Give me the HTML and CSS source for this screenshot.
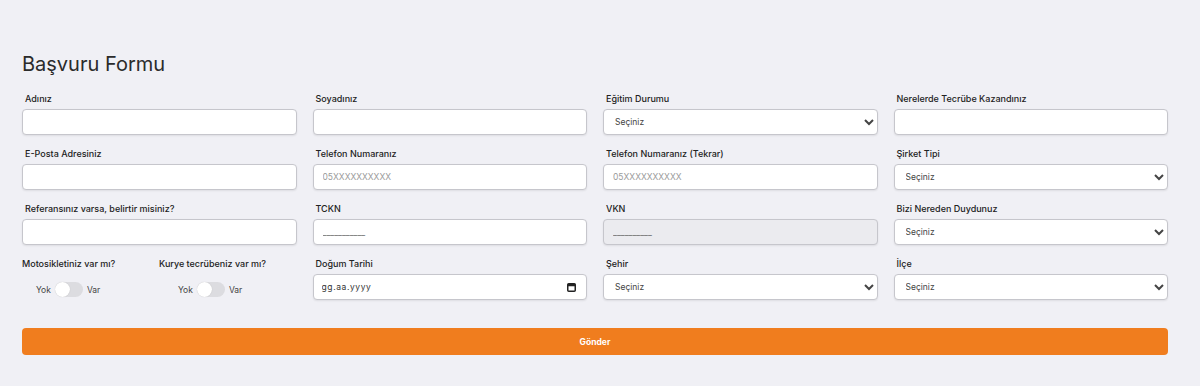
FILE: index.html
```html
<!DOCTYPE html>
<html lang="tr">
<head>
    <meta charset="UTF-8">
    <meta name="viewport" content="width=device-width, initial-scale=1.0">
    <title>Başvuru Formu</title>
    <link rel="stylesheet" href="styles.css">
</head>
<body>
    <div class="page">
        <h2 class="title">Başvuru Formu</h2>
        <form class="form-grid">
            <div class="field">
                <label>Adınız</label>
                <input type="text" class="control">
            </div>
            <div class="field">
                <label>Soyadınız</label>
                <input type="text" class="control">
            </div>
            <div class="field">
                <label>Eğitim Durumu</label>
                <select class="control"><option>Seçiniz</option></select>
            </div>
            <div class="field">
                <label>Nerelerde Tecrübe Kazandınız</label>
                <input type="text" class="control">
            </div>

            <div class="field">
                <label>E-Posta Adresiniz</label>
                <input type="text" class="control">
            </div>
            <div class="field">
                <label>Telefon Numaranız</label>
                <input type="text" class="control" placeholder="05XXXXXXXXXX">
            </div>
            <div class="field">
                <label>Telefon Numaranız (Tekrar)</label>
                <input type="text" class="control" placeholder="05XXXXXXXXXX">
            </div>
            <div class="field">
                <label>Şirket Tipi</label>
                <select class="control"><option>Seçiniz</option></select>
            </div>

            <div class="field">
                <label>Referansınız varsa, belirtir misiniz?</label>
                <input type="text" class="control">
            </div>
            <div class="field">
                <label>TCKN</label>
                <input type="text" class="control mask" placeholder="___________">
            </div>
            <div class="field">
                <label>VKN</label>
                <input type="text" class="control mask" placeholder="__________" disabled>
            </div>
            <div class="field">
                <label>Bizi Nereden Duydunuz</label>
                <select class="control"><option>Seçiniz</option></select>
            </div>

            <div class="field switches">
                <div class="switch-group">
                    <label>Motosikletiniz var mı?</label>
                    <div class="switch-row">
                        <span>Yok</span>
                        <span class="switch"><span class="knob"></span></span>
                        <span>Var</span>
                    </div>
                </div>
                <div class="switch-group">
                    <label>Kurye tecrübeniz var mı?</label>
                    <div class="switch-row">
                        <span>Yok</span>
                        <span class="switch"><span class="knob"></span></span>
                        <span>Var</span>
                    </div>
                </div>
            </div>
            <div class="field">
                <label>Doğum Tarihi</label>
                <div class="date-wrap">
                    <input type="text" class="control date" placeholder="gg.aa.yyyy">
                    <svg class="cal" width="9" height="9" viewBox="0 0 9 9">
                        <rect x="0.75" y="0.75" width="7.5" height="7.5" rx="1" fill="none" stroke="#222" stroke-width="1.5"/>
                        <rect x="0.75" y="0.75" width="7.5" height="2.5" fill="#222"/>
                    </svg>
                </div>
            </div>
            <div class="field">
                <label>Şehir</label>
                <select class="control"><option>Seçiniz</option></select>
            </div>
            <div class="field">
                <label>İlçe</label>
                <select class="control"><option>Seçiniz</option></select>
            </div>

            <button type="button" class="submit">Gönder</button>
        </form>
    </div>
</body>
</html>
```

FILE: styles.css
```css
body {
    margin: 0;
    background-color: #f0f0f5;
    font-family: Inter, "Noto Sans", sans-serif;
    color: #222;
}
.page {
    padding: 52px 32px 0 22px;
}
.title {
    margin: 0 0 16px 0;
    font-size: 20px;
    font-weight: 400;
    line-height: 25px;
    color: #2b2b2b;
}
.form-grid {
    display: grid;
    grid-template-columns: repeat(4, 1fr);
    column-gap: 16px;
    row-gap: 13px;
}
.field label {
    display: block;
    font-size: 9px;
    font-weight: 500;
    line-height: 12px;
    margin: 0 0 4px 3px;
    color: #222;
}
.control {
    display: block;
    box-sizing: border-box;
    width: 100%;
    height: 26px;
    padding: 0 9px;
    background-color: #fff;
    border: 1px solid #c6c6cc;
    border-radius: 4px;
    box-shadow: 0 1px 2px rgba(0, 0, 0, 0.08);
    font-family: Inter, "Noto Sans", sans-serif;
    font-size: 8.5px;
    color: #444;
}
.control::placeholder {
    color: #9a9a9a;
}
.control:disabled {
    background-color: #ebebef;
}
select.control {
    padding-left: 7px;
}
.mask::placeholder {
    color: #666;
}
.date-wrap {
    position: relative;
}
.date {
    padding-left: 8px;
    letter-spacing: 0.6px;
}
.date::placeholder {
    color: #333;
}
.cal {
    position: absolute;
    right: 11px;
    top: 9px;
}
.switches {
    display: grid;
    grid-template-columns: 137px 1fr;
}
.switches label {
    margin-left: 0;
}
.switch-row {
    display: flex;
    align-items: center;
    gap: 4px;
    margin: 12px 0 0 14px;
    font-size: 8.5px;
    color: #444;
}
.switch-group + .switch-group .switch-row {
    margin-left: 19px;
}
.switch {
    position: relative;
    width: 28px;
    height: 15px;
    border-radius: 8px;
    background-color: #dcdce0;
}
.knob {
    position: absolute;
    left: 0;
    top: 0;
    width: 15px;
    height: 15px;
    border-radius: 50%;
    background-color: #fff;
    box-shadow: 0 0 1px rgba(0, 0, 0, 0.2);
}
.submit {
    grid-column: 1 / -1;
    height: 27px;
    margin-top: 15px;
    border: none;
    border-radius: 4px;
    background-color: #f07d1e;
    color: #fff;
    font-family: Inter, "Noto Sans", sans-serif;
    font-size: 8.5px;
    font-weight: 700;
}
```
